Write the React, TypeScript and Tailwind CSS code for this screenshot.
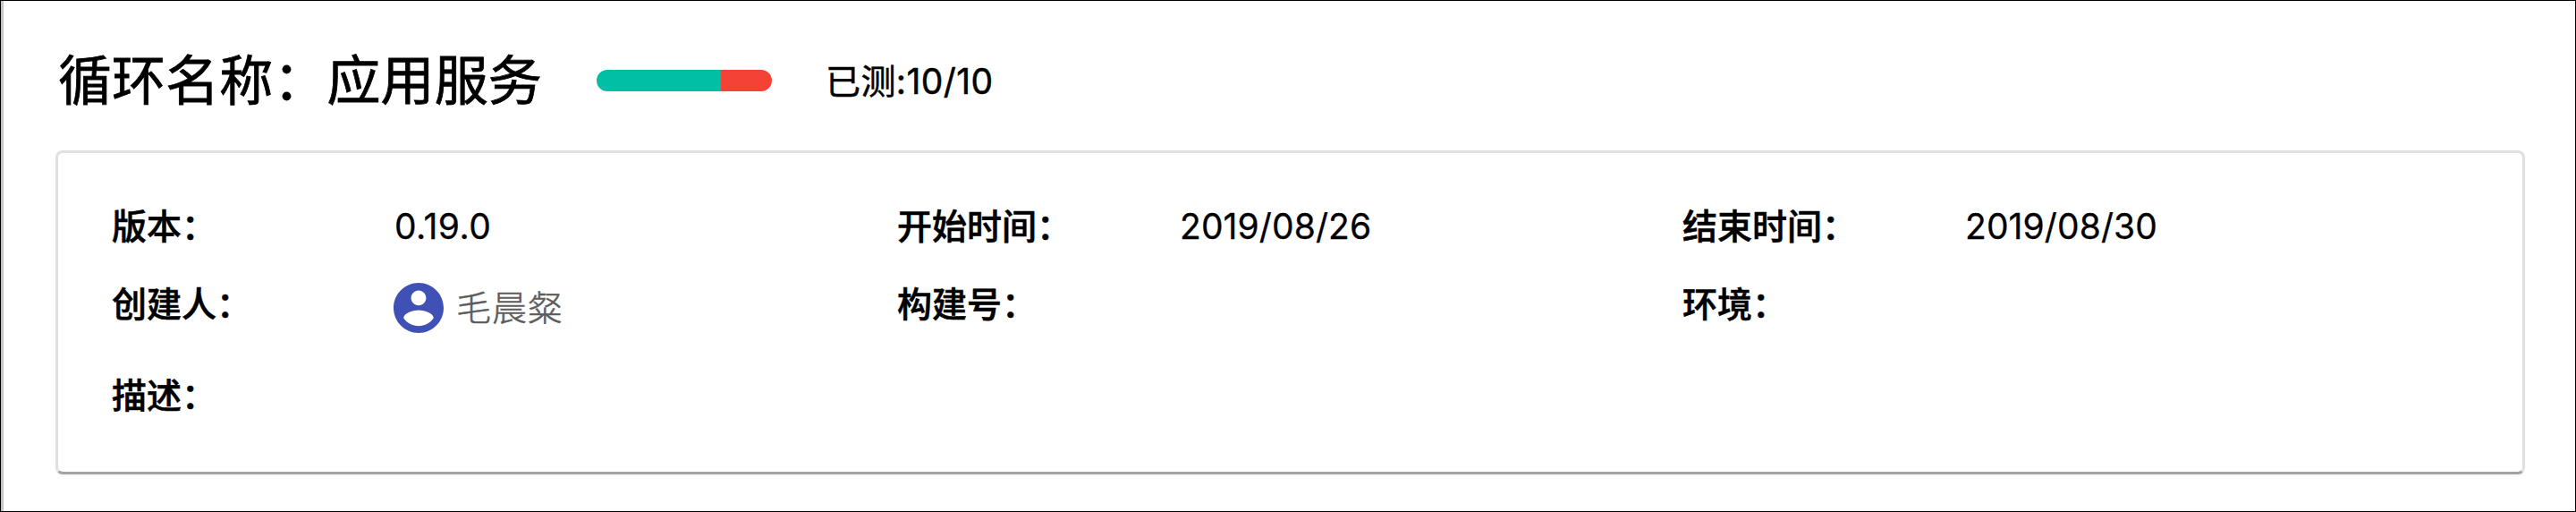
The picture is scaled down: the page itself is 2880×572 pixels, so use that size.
import type { ReactNode } from "react";

type FieldProps = { label: string; children?: ReactNode };

function Field({ label, children }: FieldProps) {
  return (
    <div className="flex w-[878px] shrink-0 items-center">
      <dt className="w-[316px] shrink-0 font-medium [-webkit-text-stroke:0.6px_black]">{label}</dt>
      <dd className="tracking-[0.1px] [-webkit-text-stroke:0.3px_black]">{children}</dd>
    </div>
  );
}

function User({ name }: { name: string }) {
  return (
    <div className="flex items-center gap-[14px] pt-[9px]">
      <svg className="-ml-px size-14" viewBox="2 2 20 20" fill="#3f51b5" stroke="none">
        <path d="M12 2C6.48 2 2 6.48 2 12s4.48 10 10 10 10-4.480 10-10S17.520 2 12 2zm0 3c1.660 0 3 1.340 3 3s-1.340 3-3 3-3-1.340-3-3 1.340-3 3-3zm0 14.200c-2.500 0-4.710-1.280-6-3.220.030-1.990 4-3.080 6-3.080 1.990 0 5.970 1.090 6 3.080-1.290 1.940-3.500 3.220-6 3.220z" />
      </svg>
      <span className="font-light tracking-[0.9px] text-[#5c5c5c] [-webkit-text-stroke:0.5px_#5c5c5c]">{name}</span>
    </div>
  );
}

export default function App() {
  return (
    <div className="h-[572px] w-[2880px] border border-black bg-white">
      <main className="h-full border-l-3 border-[#c8c4c4] pl-[58px] font-['Inter','Noto_Sans_CJK_SC',sans-serif] text-[39px] leading-none text-black">
        <header className="flex h-[167px] items-center pt-[11px]">
          <h1 className="w-[605px] pl-[3px] text-[60px] tracking-[0.1px] [-webkit-text-stroke:0.8px_black]">循环名称：应用服务</h1>
          <div className="flex h-6 w-[196px] overflow-hidden rounded-full">
            <div className="w-[139px] bg-[#00bfa5]" />
            <div className="flex-1 bg-[#f44336]" />
          </div>
          <span className="ml-[60px] tracking-[0.4px] [-webkit-text-stroke:0.5px_black]">已测:10/10</span>
        </header>
        <section className="h-[362px] w-[2761px] rounded-[8px] border-3 border-[#e0e0e0] border-b-[#a3a3a3] shadow-[0_2px_2px_rgba(0,0,0,0.04)]">
          <dl className="flex flex-col pl-[60px] pt-[39px]">
            <div className="flex h-[84px] items-center">
              <Field label="版本：">
                <span className="tracking-[0.5px]">0.19.0</span>
              </Field>
              <Field label="开始时间：">2019/08/26</Field>
              <Field label="结束时间：">2019/08/30</Field>
            </div>
            <div className="flex h-[90px] items-center">
              <Field label="创建人：">
                <User name="毛晨粲" />
              </Field>
              <Field label="构建号：" />
              <Field label="环境：" />
            </div>
            <div className="flex h-[114px] items-center">
              <Field label="描述：" />
            </div>
          </dl>
        </section>
      </main>
    </div>
  );
}
